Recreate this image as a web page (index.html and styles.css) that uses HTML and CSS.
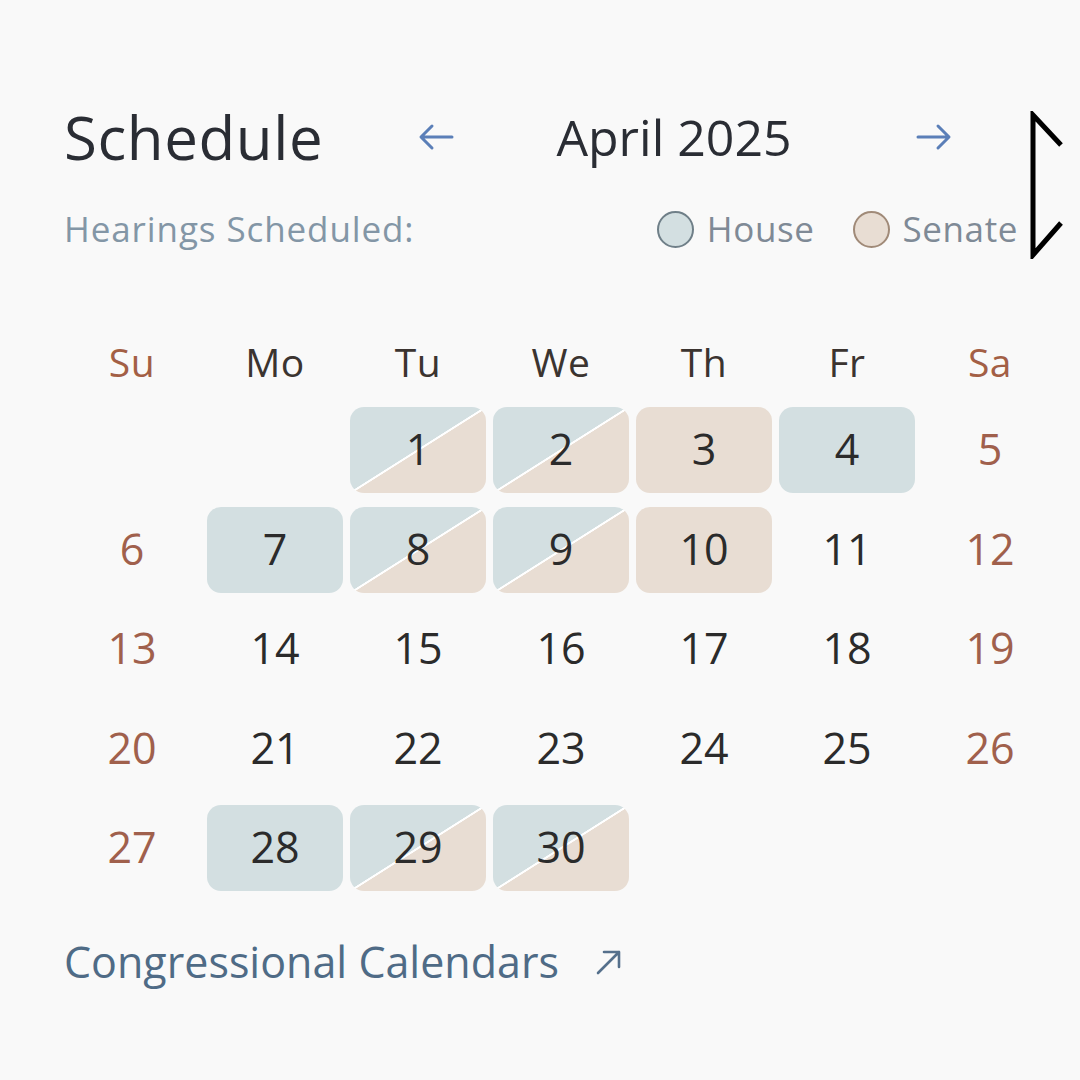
FILE: index.html
```html
<!DOCTYPE html>
<html>
<head>
<meta charset="utf-8">
<link rel="stylesheet" href="styles.css">
</head>
<body>
<div class="widget">
  <div class="header">
    <h1 class="title">Schedule</h1>
    <div class="nav">
      <svg class="arrow" viewBox="0 0 40 32" width="40" height="32"><path d="M36 16H6M16 5L5 16l11 11" fill="none" stroke="#5b7fb8" stroke-width="3" stroke-linecap="round" stroke-linejoin="round"/></svg>
      <span class="month">April 2025</span>
      <svg class="arrow" viewBox="0 0 40 32" width="40" height="32"><path d="M4 16h30M24 5l11 11-11 11" fill="none" stroke="#5b7fb8" stroke-width="3" stroke-linecap="round" stroke-linejoin="round"/></svg>
    </div>
  </div>
  <div class="legend-row">
    <span class="legend-label">Hearings Scheduled:</span>
    <div class="legend">
      <span class="legend-item"><span class="dot house"></span>House</span>
      <span class="legend-item"><span class="dot senate"></span>Senate</span>
    </div>
  </div>
  <div class="weekdays">
    <span class="wd weekend">Su</span>
    <span class="wd">Mo</span>
    <span class="wd">Tu</span>
    <span class="wd">We</span>
    <span class="wd">Th</span>
    <span class="wd">Fr</span>
    <span class="wd weekend">Sa</span>
  </div>
  <div class="grid">
    <span class="day"></span>
    <span class="day"></span>
    <span class="day both">1</span>
    <span class="day both">2</span>
    <span class="day senate">3</span>
    <span class="day house">4</span>
    <span class="day weekend">5</span>

    <span class="day weekend">6</span>
    <span class="day house">7</span>
    <span class="day both">8</span>
    <span class="day both">9</span>
    <span class="day senate">10</span>
    <span class="day">11</span>
    <span class="day weekend">12</span>

    <span class="day weekend">13</span>
    <span class="day">14</span>
    <span class="day">15</span>
    <span class="day">16</span>
    <span class="day">17</span>
    <span class="day">18</span>
    <span class="day weekend">19</span>

    <span class="day weekend">20</span>
    <span class="day">21</span>
    <span class="day">22</span>
    <span class="day">23</span>
    <span class="day">24</span>
    <span class="day">25</span>
    <span class="day weekend">26</span>

    <span class="day weekend">27</span>
    <span class="day house">28</span>
    <span class="day both">29</span>
    <span class="day both">30</span>
    <span class="day"></span>
    <span class="day"></span>
    <span class="day"></span>
  </div>
  <a class="link" href="#">Congressional Calendars
    <svg class="ext" viewBox="0 0 32 32" width="32" height="32"><path d="M5 27L26 6M11 6h15v15" fill="none" stroke="#55708c" stroke-width="2.6" stroke-linecap="round" stroke-linejoin="round"/></svg>
  </a>
  <svg class="chevron" viewBox="0 0 34 148" width="34" height="148"><path d="M32 34L4 4v140l28-32" fill="none" stroke="#000" stroke-width="5" stroke-linejoin="miter"/></svg>
</div>
</body>
</html>
```
FILE: styles.css
```css
html, body {
  margin: 0;
  padding: 0;
  background: #f9f9f9;
}
body {
  width: 1080px;
  height: 1080px;
  overflow: hidden;
  font-family: "Open Sans", "Liberation Sans", sans-serif;
}
.widget {
  position: relative;
  padding: 107px 22px 0 64px;
}
.header {
  display: flex;
  align-items: center;
  height: 60px;
}
.title {
  flex: 0 0 352px;
  margin: 0;
  font-size: 60px;
  font-weight: 400;
  color: #2a2d34;
  line-height: 60px;
  letter-spacing: 0.6px;
}
.nav {
  width: 538px;
  display: flex;
  align-items: center;
  justify-content: space-between;
}
.arrow {
  display: block;
}
.month {
  font-size: 50px;
  line-height: 60px;
  color: #2a2d34;
  margin-right: 22px;
}
.legend-row {
  margin-top: 42px;
  display: flex;
  align-items: center;
  justify-content: space-between;
  height: 40px;
  padding-right: 40px;
}
.legend-label {
  font-size: 35px;
  color: #8396a6;
  line-height: 40px;
  letter-spacing: 0.9px;
}
.legend {
  display: flex;
  align-items: center;
  gap: 38px;
}
.legend-item {
  display: flex;
  align-items: center;
  gap: 13px;
  font-size: 35px;
  color: #7f8a96;
  line-height: 40px;
  letter-spacing: 0.6px;
}
.dot {
  width: 37px;
  height: 37px;
  border-radius: 50%;
  box-sizing: border-box;
}
.dot.house {
  background: #d3dfe1;
  border: 2.5px solid #6f7f88;
}
.dot.senate {
  background: #e8ddd3;
  border: 2.5px solid #a08a78;
}
.weekdays {
  margin-top: 88px;
  display: grid;
  grid-template-columns: repeat(7, 136px);
  column-gap: 7px;
  height: 50px;
  align-items: center;
}
.wd {
  text-align: center;
  font-size: 39px;
  color: #3b3430;
  line-height: 50px;
  letter-spacing: 0.5px;
}
.wd.weekend {
  color: #a35f45;
}
.grid {
  margin-top: 20px;
  display: grid;
  grid-template-columns: repeat(7, 136px);
  grid-auto-rows: 86px;
  column-gap: 7px;
  row-gap: 13.5px;
}
.day {
  display: flex;
  align-items: center;
  justify-content: center;
  border-radius: 14px;
  font-size: 43px;
  color: #2b2b2b;
  padding-bottom: 3px;
  box-sizing: border-box;
}
.day.weekend {
  color: #a0604c;
}
.day.house {
  background: #d3dfe1;
}
.day.senate {
  background: #e8ddd3;
}
.day.both {
  background: linear-gradient(to bottom right, #d3dfe1 49.2%, #ffffff 49.6%, #ffffff 50.6%, #e8ddd3 51%);
}
.link {
  margin-top: 46px;
  display: inline-flex;
  align-items: center;
  gap: 34px;
  font-size: 43px;
  line-height: 50px;
  color: #4f6b86;
  text-decoration: none;
}
.ext {
  display: block;
}
.chevron {
  position: absolute;
  left: 1029px;
  top: 111px;
}
```
